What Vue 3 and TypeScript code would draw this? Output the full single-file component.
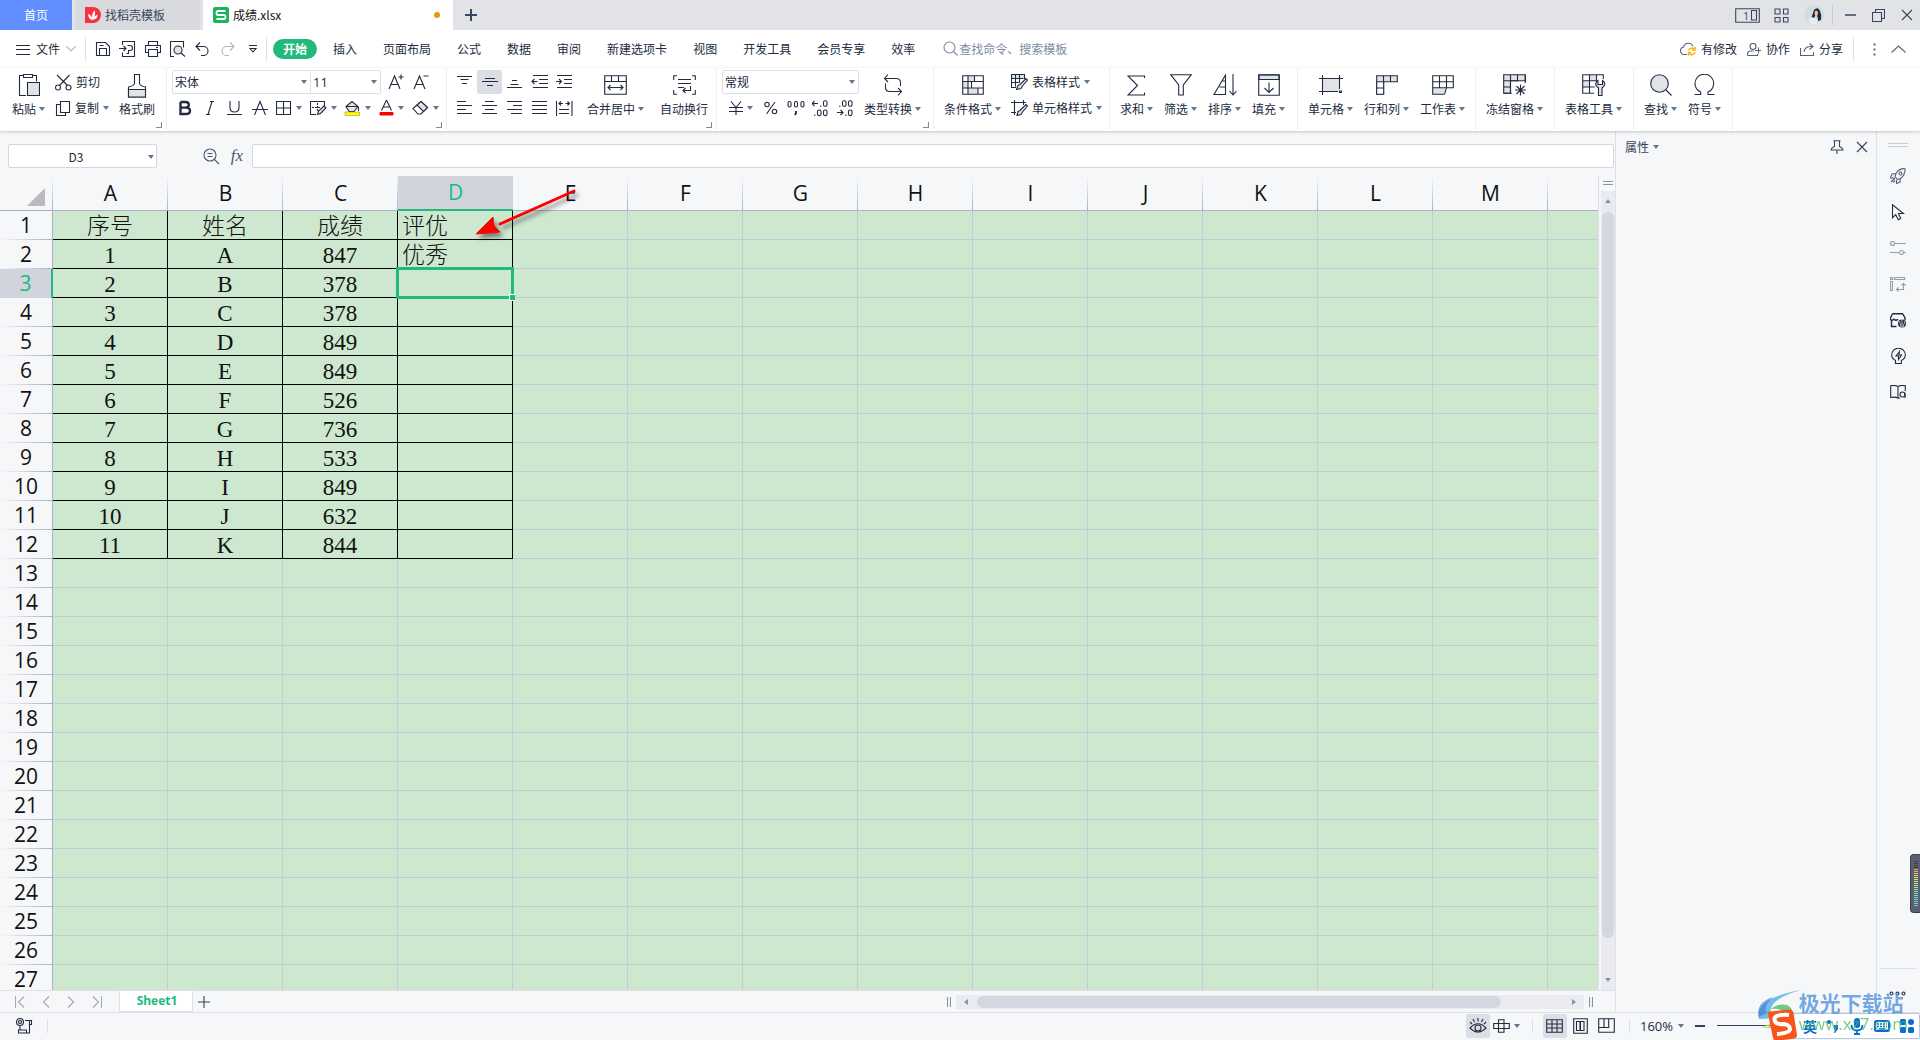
<script setup lang="ts">
import { h, ref } from 'vue'

type Glyph = [number, number, string]

const soft = 'fill="#e1e3e8"'
const icons: Record<string, Glyph> = {
  caret: [6, 4, '<path d="M0 0h6L3 4z" fill="currentColor" stroke="none"/>'],
  corner: [6, 6, '<path d="M5.500 0v5.500H0"/>'],
  menu: [14, 11, '<path d="M0 1.500h14M0 5.500h14M0 10.500h14"/>'],
  down: [10, 6, '<path d="M.5 .5l4.500 4.500 4.500-4.500"/>'],
  save: [16, 16, '<path d="M1.500 1.500h9l4 4v9h-13zM4.500 14.500v-7h7v7M4.500 4.500h4"/>'],
  exportPdf: [17, 16, '<path d="M3.500 4v-3.500h12v15h-12v-4M0 7.500h7M4.500 5l2.500 2.500-2.500 2.500M8.500 4.500h2.500a2 2 0 010 5H9.500v3H7.500"/>'],
  print: [16, 16, '<path d="M3.500 4.500v-4h9v4M3.500 11.500h-3v-7h15v7h-3M3.500 8.500h9v7h-9zM11 6.500h2"/>'],
  preview: [16, 16, `<path d="M4 15.500H.5V.5h13v6"/><circle cx="8" cy="9" r="4" ${soft}/><path d="M11 12l4 3.500"/>`],
  undo: [15, 14, '<path d="M5 .5l-4 4 4 4M1 4.500h7.500a4.500 4.500 0 010 9H6"/>'],
  redo: [15, 14, '<path d="M10 .5l4 4-4 4M14 4.500H6.500a4.500 4.500 0 000 9H9"/>'],
  more: [8, 8, '<path d="M0 .5h8M1 3.500l3 3.500 3-3.500z"/>'],
  search: [16, 16, '<circle cx="6.500" cy="6.500" r="5.500"/><path d="M10.500 10.500l4 4"/>'],
  plus: [14, 14, '<path d="M7 1v12M1 7h12"/>'],
  cloud: [17, 14, '<path d="M7 12.500H4.500A3.800 3.800 0 013.500 5 5 5 0 0113 4.500"/><g stroke="#f9b115" stroke-width="1.600"><path d="M8.500 8.500a3.500 3.500 0 016-1M15 10a3.500 3.500 0 01-6 1.500"/><path d="M15 5v3h-3M8.500 13.500v-3h3"/></g>'],
  collab: [15, 13, '<circle cx="6" cy="3.500" r="3"/><path d="M.5 12.500v-1.500q0-3 3-3h3M.5 12.500h10v-1.500M8 7.500h6M11.500 4.500v6"/>'],
  share: [15, 13, '<path d="M.5 5v7.500h13V9M4 9q.5-5 6-5.500h2.500M9.500 .5l3.500 3-3.500 3"/>'],
  dots: [3, 13, '<path d="M.5 .5h2v2h-2zM.5 5.500h2v2h-2zM.5 10.500h2v2h-2z" fill="currentColor" stroke="none"/>'],
  up: [15, 8, '<path d="M.5 7.500L7.500 1l7 6.500"/>'],
  screens: [25, 15, '<path d="M.7 .7h23.600v13.600H.7zM16.500 2.500h5v9.500h-5z"/><text x="8" y="12" font-size="11" fill="currentColor" stroke="none" font-family="Open Sans, sans-serif">1</text>'],
  apps: [15, 15, '<path d="M1 1h5v5H1zM9.500 1h4.500v5H9.500zM1 9.500h5V14H1zM9.500 9.500h4.500V14H9.500z"/>'],
  minimize: [11, 2, '<path d="M0 1h11" stroke-width="1.500"/>'],
  restore: [13, 13, '<path d="M3.500 3.500v-3h9v9h-3M.5 3.500h9v9h-9z"/>'],
  close: [12, 12, '<path d="M1 1l10 10M11 1L1 11"/>'],
  paste: [22, 24, `<path d="M8 22.500H1.500v-20h4M15 2.500h3.500v6M5.500 1.500h9v3h-9z"/><path d="M9.500 9.500h12v13h-12z" ${soft}/>`],
  cut: [17, 17, '<path d="M2 1l10.500 10.500M14.500 1L4.500 11.500"/><circle cx="3" cy="13.500" r="2.500"/><circle cx="13.500" cy="13.500" r="2.500"/>'],
  copy: [16, 17, '<path d="M5.500 4.500h-4v11h9v-3M5.500 1.500h9v11h-9z"/>'],
  brush: [20, 25, `<path d="M7.500 10V1.500h5V10q0 3 6 4v10H1.500V14q6-1 6-4z"/><path d="M1.500 16.500h17v7.500h-17z" ${soft}/>`],
  fontUp: [16, 16, '<path d="M1 15L6.500 2 12 15M3 10.500h7M10.500 3h5M13 .5v5"/>'],
  fontDown: [16, 16, '<path d="M1 15L6.500 2 12 15M3 10.500h7M10.500 2h5"/>'],
  bold: [14, 16, '<path d="M2.500 2v12H8q4 0 4-3.200T8 7.600H2.500M2.500 2H7.500q3.300 0 3.300 2.800T7.500 7.600" stroke-width="2.400"/>'],
  italic: [14, 16, '<path d="M7 1.500h4M3 14.500h4M9 1.500l-4 13"/>'],
  underline: [15, 16, '<path d="M3 1v6.500q0 4.500 4.500 4.500T12 7.500V1M0 14.500h15"/>'],
  strike: [16, 16, '<path d="M2.500 15L8 1.500 13.500 15M0 9.500h16"/>'],
  borders: [16, 16, '<path d="M.5 1.500h14v13h-14zM7.500 1.500v13M.5 8h14"/>'],
  drawBorder: [17, 16, `<path d="M6 14.500H.5v-13h14V6"/><path d="M7.500 3v9M2 7.500h8" stroke-dasharray="2 1"/><path d="M7.500 14.500l1-3.500 5.500-5 2 2-5.500 5.500z" ${soft}/>`],
  fill: [17, 16, `<path d="M2 6.500l6-5 6 5-4 5H5z" ${soft}/><path d="M2 6.500h12M14.500 7v4"/><path d="M1 12h14.500v3.500H1z" fill="#ff0" stroke="#9aa130" stroke-width=".6"/>`],
  fontColor: [15, 16, '<path d="M2.500 10.500L7.500 0l5 10.500M4 7h7"/><path d="M1 12.500h13v2.500H1z" fill="#f00" stroke="#f00" stroke-width="1"/>'],
  eraser: [17, 16, `<path d="M1 8.500L9 1.500l6.500 6L9 14H6z"/><path d="M5 5l6.500 6.500L15.500 7.500 9 1.500z" ${soft}/>`],
  top: [15, 14, '<path d="M0 1.500h15M3.500 4.500h8M5 8.500h5"/>'],
  middle: [16, 14, '<path d="M3 3.500h10M0 6.500h16M5 10.500h6"/>'],
  bottom: [15, 14, '<path d="M5 5.500h5M3.500 9.500h8M0 12.500h15"/>'],
  outdent: [17, 14, '<path d="M2 .5h15M8 4.500h9M8 8.500h9M2 12.500h15M1 6.500h5.500M3.500 4L1 6.500 3.500 9"/>'],
  indent: [17, 14, '<path d="M1 .5h15M8 4.500h8M8 8.500h8M1 12.500h15M0 6.500h5.500M3 4l2.500 2.500L3 9"/>'],
  left: [15, 14, '<path d="M0 .5h9M0 4.500h15M0 8.500h9M0 12.500h15"/>'],
  center: [15, 14, '<path d="M3 .5h9M0 4.500h15M3 8.500h9M0 12.500h15"/>'],
  right: [15, 14, '<path d="M0 .5h15M6 4.500h9M0 8.500h15M4 12.500h11"/>'],
  justify: [15, 14, '<path d="M0 .5h15M0 4.500h15M0 8.500h15M0 12.500h15"/>'],
  distribute: [17, 15, '<path d="M.5 0v15M16 0v15M3 8.500h10M3 12.500h10M3 2.500h4M9.500 2.500h4M5 .5l-2 2 2 2M11.500 .5l2 2-2 2"/>'],
  merge: [23, 20, '<path d="M.7 .7h21.600v18.600H.7zM.7 6.500h21.600M7.500 .7v5.800M14.500 .7v5.800M4 12.500h15M6.500 10L4 12.500 6.500 15M16.500 10l2.500 2.500-2.500 2.500"/>'],
  wrap: [23, 20, '<path d="M4 .7H.7V5M.7 15v4.300H4M19 .7h3.300V5M22.300 15v4.300H19M5 4.500h13M5 8.500h13M5 12.500h6M17.500 11v4.500H10M12.500 13L10 15.500l2.500 2.500"/>'],
  yen: [14, 16, '<path d="M2 1.500l5 6 5-6M7 7.500V15M0 7.500h14M0 11.500h14"/>'],
  percent: [14, 14, '<circle cx="3" cy="3.500" r="2.200"/><circle cx="10.500" cy="10.500" r="2.200"/><path d="M11 1L2.500 13"/>'],
  thousands: [18, 16, '<rect x="1" y="1.500" width="3" height="5.500" rx="1.500"/><rect x="7.500" y="1.500" width="3" height="5.500" rx="1.500"/><rect x="14" y="1.500" width="3" height="5.500" rx="1.500"/><path d="M9 11v2l-1 2" stroke-width="1.800"/>'],
  decLess: [17, 17, '<path d="M0 3.500h6M2.500 1L0 3.500 2.500 6M8 6.300h1.500M2 15.300h1.500"/><rect x="11.500" y=".7" width="3.500" height="5.600" rx="1.500"/><rect x="5.500" y="10" width="3.500" height="5.600" rx="1.500"/><rect x="11.500" y="10" width="3.500" height="5.600" rx="1.500"/>'],
  decMore: [17, 17, '<path d="M0 12.500h6M3.500 10L6 12.500 3.500 15M8 15.300h1.500M2 6.300h1.500"/><rect x="5.500" y=".7" width="3.500" height="5.600" rx="1.500"/><rect x="11.500" y=".7" width="3.500" height="5.600" rx="1.500"/><rect x="11.500" y="10" width="3.500" height="5.600" rx="1.500"/>'],
  convert: [20, 22, '<path d="M5 .5l-3.500 4 3.500 3.500M1.500 4.500H13q4.500 0 4.500 4V12M15 14l3.500 3.500L15 21.500M18.500 17.500H7q-4.500 0-4.500-4V9.500"/>'],
  condFmt: [22, 20, `<path d="M6 1h7v6H6zM1 7h5v6H1zM6 13h10v6H6z" ${soft} stroke="none"/><path d="M.7 .7h20.600v18.600H.7zM.7 6.500h20.600M.7 13h20.600M6 .7v18.600M12.500 .7v5.800M9.500 6.500v6.500M16 13v6.300"/>`],
  tableStyle: [17, 16, `<path d="M1 1h12v4H1z" ${soft} stroke="none"/><path d="M5 13.500H.5v-13h13V5M.5 4.500h12M.5 8.500h8M4.500 .5v12M8.500 .5v8"/><path d="M5.500 15.500l1.500-4 2-1 6-6 1.500 1.500-5 6-1.500 2.500z" ${soft}/>`],
  cellStyle: [17, 16, `<path d="M0 2.500h15M3.500 0v15M12.500 0v5M0 12.500h5"/><path d="M6 15.500l1-4 2-1 6-6 1.500 1.500-5 6-1.500 2.500z" ${soft}/>`],
  sum: [19, 21, '<path d="M17.500 3V1H1l9.500 9.500L1 20h16.500v-2.500"/>'],
  filter: [22, 22, '<path d="M.7 .7h20.600l-8 10.300v10h-4.600V11z"/>'],
  sort: [24, 22, '<path d="M12.500 20.500V1L1 20.500zM6.500 13h6M9.500 7h3M20 0v20.500M16.500 17l3.500 4 3.500-4"/>'],
  fillDown: [22, 22, `<path d="M1 1h20v4.500H1z" ${soft}/><path d="M.7 .7h20.600v20.600H.7zM11 8.500v9M6.500 14l4.500 4.500 4.500-4.500"/>`],
  cells: [24, 20, `<path d="M4 4h17v12H4z" ${soft} stroke="none"/><path d="M0 3.500h24M0 16.500h19M3.500 0v20M20.500 0v14M20.500 16h2v1.500h-2z"/>`],
  rowsCols: [22, 20, `<path d="M.7 .7h20.600v6H7.500v12.600H.7z" ${soft}/><path d="M.7 6.700h7v12.600h-7z" fill="#fff"/><path d="M7.500 .7v6M14.500 .7v6M.7 13h7"/>`],
  sheet: [22, 20, `<path d="M1 13h13l-2 6H1z" ${soft} stroke="none"/><path d="M12 19.300H.7V.7h20.600v12H14.500l-2 6.600M.7 6.700h20.600M.7 12.700h14M7.500 .7v12M14.500 .7v12"/>`],
  freeze: [24, 22, `<path d="M.7 .7h21.600v6H7.500v12.600H.7z" ${soft}/><path d="M7.500 .7v18.600M14.500 .7v6M22.300 .7V9M.7 6.700h15M.7 13h7M.7 19.300h8M17.500 10.500v11M12 16h11M13.500 12l8 8M21.500 12l-8 8"/>`],
  tableTool: [24, 22, `<path d="M1 7h6v6H1zM7 1h7v6H7z" ${soft} stroke="none"/><path d="M12 19.300H.7V.7h20.600V5M.7 6.700h14M.7 13h12M7.500 .7v18.600M14.500 .7v7"/><path d="M16 6.500q-3 2-2 5l2.500 2.500v7.500h3.500V14l2.500-2.500q1-3-2-5v4h-4.500z" ${soft}/>`],
  find: [22, 22, `<circle cx="9.500" cy="9.500" r="8.800" ${soft}/><path d="M16 16l5.500 5.500"/>`],
  omega: [21, 22, '<path d="M.5 20.500h6.200v-2.500A9.300 9.300 0 1114 18v2.500h6.500"/>'],
  zoomOut: [17, 17, '<circle cx="7" cy="7" r="6"/><path d="M11.500 11.500l4.500 4.500M4.500 5.500h5M4.500 8.500h5"/>'],
  pin: [14, 14, '<path d="M3.500 .7h7M4.500 .7v5.800q-3 1-3.500 3.500h12q-.5-2.500-3.500-3.500V.7M7 10v4"/>'],
  grip: [20, 4, '<path d="M0 .5h20M0 3.500h20" stroke="#c9cbd2"/>'],
  rocket: [16, 16, '<path d="M15 .7q-6-.5-9 4.800l-1 3 2.500 3 3-1Q15.500 7 15 .7zM6 5.500L2 6l-1.500 4h3.500M10.500 10l-.5 4-3.500 1.500V12M5 10l-4 4M3 14.500l2-2"/><circle cx="10.500" cy="5.500" r="1.500"/>'],
  cursor: [14, 17, '<path d="M1.500 .7v13l3.200-3 2.600 5 2.400-1.200L7.500 9.500h5z"/>'],
  sliders: [16, 14, '<circle cx="2.500" cy="2.500" r="2"/><path d="M4.500 2.500H16M0 11.500h9.500M13.500 11.500H16"/><circle cx="11.500" cy="11.500" r="2"/>'],
  pivot: [16, 15, '<path d="M.5 .5h2v2h-2zM4.500 .5h10v2h-10zM.5 4.500h2v9h-2zM6.500 12.500h7v-6M8.500 10.500l-2 2 2 2M11.500 8.500l2-2 2 2"/>'],
  shop: [17, 15, '<path d="M6.500 13.500h-5v-7M2.500 .7h10l2.500 4v2.500M2.500 .7l-2 4v2q2 1.500 3.500-.5 2 2 4 0" stroke-width="1.400"/><circle cx="12" cy="10.500" r="4" fill="currentColor" stroke="none"/><path d="M12 5.500v9M9.500 8l1.500 6M15 8l-2 6" stroke="#f6f7f9" stroke-width=".7"/>'],
  bulb: [15, 17, '<path d="M4.500 15.500v-3Q.7 10.500.7 7a6.500 6.500 0 0113.600 0q0 3.500-4 5.500v3z"/><path d="M8.500 3.500L5 8h2.500v3.500L10.500 7H8z"/>'],
  manual: [17, 14, '<path d="M8 13q-3-1.500-7.300-.5V.7Q5 0 8 1.500V13zM8 1.500Q11 0 15.300 .7V6"/><circle cx="12.500" cy="9.500" r="2.500"/><path d="M15 8v5M8 13h2"/>'],
  three: [18, 5, '<circle cx="2.500" cy="2.500" r="1.500"/><circle cx="8.500" cy="2.500" r="1.500"/><circle cx="14.500" cy="2.500" r="1.500"/>'],
  first: [10, 12, '<path d="M.5 0v12M9 .5L3.500 6 9 11.500"/>'],
  prev: [8, 12, '<path d="M7 .5L1.500 6 7 11.500"/>'],
  next: [8, 12, '<path d="M1 .5L6.500 6 1 11.500"/>'],
  last: [10, 12, '<path d="M9.500 0v12M1 .5L6.500 6 1 11.500"/>'],
  record: [17, 16, `<circle cx="4" cy="4" r="3.500" ${soft}/><circle cx="4" cy="4" r="1.500"/><path d="M9 2.500h6.500v4h-2M13.500 2.500v12.500h-11v-3h8v3M4 8v4"/>`],
  eye: [18, 16, '<path d="M1 10q8-8.500 16 0-8 8-16 0z"/><circle cx="9" cy="10" r="3"/><path d="M9 0v3.500M4 1l1.500 3M14 1l-1.500 3M1 4l2 2M17 4l-2 2"/>'],
  cross: [17, 14, '<path d="M5.500 .7h5.500v12.600H5.500zM.7 4.500h15.600v5H.7z"/>'],
  viewGrid: [17, 14, '<path d="M.7 .7h15.600v12.600H.7zM.7 5h15.600M.7 9h15.600M6 .7v12.600M11 .7v12.600"/>'],
  viewPage: [15, 16, '<path d="M.7 .7h13.600v14.600H.7zM3.500 3.500h3.500v9H3.500zM7.500 3.500h3.500v9H7.500z"/>'],
  viewBreak: [17, 15, '<path d="M.7 .7h15.600v13.600H.7zM.7 9.500h10v-9M6 .7v8.800"/>'],
  bars: [4, 10, '<path d="M.5 0v10M3.500 0v10"/>'],
  arrowUp: [6, 4, '<path d="M0 4h6L3 0z" fill="currentColor" stroke="none"/>'],
  arrowDown: [6, 4, '<path d="M0 0h6L3 4z" fill="currentColor" stroke="none"/>'],
  arrowLeft: [4, 6, '<path d="M4 0v6L0 3z" fill="currentColor" stroke="none"/>'],
  arrowRight: [4, 6, '<path d="M0 0v6l4-3z" fill="currentColor" stroke="none"/>'],
}

const Icon = (props: { n: string }) => {
  const [w, ht, body] = icons[props.n]
  return h('svg', {
    width: w, height: ht, viewBox: `0 0 ${w} ${ht}`, fill: 'none', stroke: 'currentColor',
    'stroke-width': 1.1, 'aria-hidden': 'true', innerHTML: body,
  })
}
Icon.props = ['n']

const quick = ['save', 'exportPdf', 'print', 'preview', 'undo', 'redo', 'more']
const menus = ['开始', '插入', '页面布局', '公式', '数据', '审阅', '新建选项卡', '视图', '开发工具', '会员专享', '效率']
const groups = [
  { cls: 'g-edit', items: [['sum', '求和'], ['filter', '筛选'], ['sort', '排序'], ['fillDown', '填充']] },
  { cls: 'g-cells', items: [['cells', '单元格'], ['rowsCols', '行和列'], ['sheet', '工作表']] },
  { cls: 'g-one', items: [['freeze', '冻结窗格']] },
  { cls: 'g-one', items: [['tableTool', '表格工具']] },
  { cls: 'g-find', items: [['find', '查找'], ['omega', '符号']] },
]
const side = ['rocket', 'cursor', 'sliders', 'pivot', 'shop', 'bulb', 'manual']

const cols = 'ABCDEFGHIJKLMN'.split('')
const data: string[][] = [
  ['序号', '姓名', '成绩', '评优'],
  ['1', 'A', '847', '优秀'],
  ['2', 'B', '378', ''],
  ['3', 'C', '378', ''],
  ['4', 'D', '849', ''],
  ['5', 'E', '849', ''],
  ['6', 'F', '526', ''],
  ['7', 'G', '736', ''],
  ['8', 'H', '533', ''],
  ['9', 'I', '849', ''],
  ['10', 'J', '632', ''],
  ['11', 'K', '844', ''],
]
const cellName = ref('D3')
const formula = ref('')
const zoom = ref(60)
const meter = ['#3b3f4c', '#3b3f4c', '#3b3f4c', '#3b3f4c', '#f0a078', '#f0b070', '#eec068', '#ecd068', '#e8dc6c', '#e8e070', '#dce478', '#cce880', '#bce888', '#a8e894', '#98e8a0', '#84e8b0', '#78e4bc', '#70e0c8', '#68dcd0', '#60d8d0', '#60d8d0', '#60d8d0', '#60d8d0']
</script>

<template>
  <div class="app">
    <header class="titlebar">
      <button class="tab home">首页</button>
      <button class="tab docer">
        <svg width="16" height="16" viewBox="0 0 16 16" aria-hidden="true"><path d="M0 0h8a8 8 0 010 16H0z" fill="#fa3040" /><path d="M7 13Q3 11 3 7q3 .5 4 4 0-5 2.500-8 1.500 4-1 8 1-2.500 4-3.500Q13 12 7 13z" fill="#fff" /></svg>
        找稻壳模板
      </button>
      <button class="tab file">
        <svg width="16" height="16" viewBox="0 0 16 16" aria-hidden="true"><rect width="16" height="16" rx="2" fill="#1cb35a" /><path d="M12.500 4H5Q3.500 4 3.500 6t1.500 2h6q1.500 0 1.500 2T11 12H3.500" fill="none" stroke="#fff" stroke-width="1.800" /></svg>
        成绩.xlsx
        <span class="dirty"></span>
      </button>
      <button class="add-tab" aria-label="新建标签"><Icon n="plus" /></button>
      <div class="win">
        <button aria-label="窗口"><Icon n="screens" /></button>
        <button aria-label="应用"><Icon n="apps" /></button>
        <button aria-label="账号">
          <svg width="20" height="20" viewBox="0 0 20 20" aria-hidden="true"><circle cx="10" cy="10" r="10" fill="#cfdde3" /><path d="M10 5q4-4 6 1 2 4 1 9l-3 1q0-5-2-6l-3 4q-2 0-1-3z" fill="#2c2830" /><path d="M11 6q3-1 3 2t-2 3-1-5z" fill="#e9c3b4" /><path d="M5 13q5-2 8 2v4q-6 1-8-2z" fill="#e6eef1" /></svg>
        </button>
        <span class="win-sep"></span>
        <button aria-label="最小化"><Icon n="minimize" /></button>
        <button aria-label="还原"><Icon n="restore" /></button>
        <button aria-label="关闭"><Icon n="close" /></button>
      </div>
    </header>

    <nav class="menubar">
      <button class="file-menu"><Icon n="menu" /><span>文件</span><Icon n="down" class="pale" /></button>
      <span class="vsep"></span>
      <div class="quick">
        <button v-for="q in quick" :key="q" :class="{ pale: q === 'redo' }" :aria-label="q"><Icon :n="q" /></button>
      </div>
      <span class="vsep"></span>
      <div class="menus">
        <button v-for="(m, i) in menus" :key="m" :class="{ on: i === 0 }">{{ m }}</button>
      </div>
      <label class="search"><Icon n="search" /><input type="text" placeholder="查找命令、搜索模板" /></label>
      <div class="menu-right">
        <button><Icon n="cloud" />有修改</button>
        <button><Icon n="collab" />协作</button>
        <button><Icon n="share" />分享</button>
        <span class="vsep"></span>
        <div class="minis">
          <button class="mini" aria-label="更多"><Icon n="dots" /></button>
          <button class="mini" aria-label="收起"><Icon n="up" /></button>
        </div>
      </div>
    </nav>

    <section class="ribbon">
      <div class="group g-clip">
        <button class="big"><span class="pic"><Icon n="paste" /></span><span class="lab">粘贴<Icon n="caret" /></span></button>
        <div class="stack">
          <button class="small"><Icon n="cut" />剪切</button>
          <button class="small"><Icon n="copy" />复制<Icon n="caret" class="car" /></button>
        </div>
        <button class="big"><span class="pic"><Icon n="brush" /></span><span class="lab">格式刷</span></button>
        <Icon n="corner" class="launch" />
      </div>
      <div class="group g-font">
        <div class="stack">
          <div class="row">
            <span class="pick pick-font"><select aria-label="字体"><option>宋体</option></select><Icon n="caret" class="car" /></span>
            <span class="pick pick-size"><select aria-label="字号"><option>11</option></select><Icon n="caret" class="car" /></span>
            <button class="ib" aria-label="增大字号"><Icon n="fontUp" /></button>
            <button class="ib" aria-label="减小字号"><Icon n="fontDown" /></button>
          </div>
          <div class="row">
            <button v-for="n in ['bold', 'italic', 'underline', 'strike']" :key="n" class="ib" :aria-label="n"><Icon :n="n" /></button>
            <button v-for="n in ['borders', 'drawBorder', 'fill', 'fontColor', 'eraser']" :key="n" class="ib wide" :aria-label="n"><Icon :n="n" /><Icon n="caret" class="car" /></button>
          </div>
        </div>
        <Icon n="corner" class="launch" />
      </div>
      <div class="group g-align">
        <div class="stack">
          <div class="row">
            <button v-for="n in ['top', 'middle', 'bottom', 'outdent', 'indent']" :key="n" class="ib" :class="{ active: n === 'middle' }" :aria-label="n"><Icon :n="n" /></button>
          </div>
          <div class="row">
            <button v-for="n in ['left', 'center', 'right', 'justify', 'distribute']" :key="n" class="ib" :aria-label="n"><Icon :n="n" /></button>
          </div>
        </div>
        <button class="big"><span class="pic"><Icon n="merge" /></span><span class="lab">合并居中<Icon n="caret" /></span></button>
        <button class="big"><span class="pic"><Icon n="wrap" /></span><span class="lab">自动换行</span></button>
        <Icon n="corner" class="launch" />
      </div>
      <div class="group g-num">
        <div class="stack">
          <div class="row">
            <span class="pick pick-num"><select aria-label="数字格式"><option>常规</option></select><Icon n="caret" class="car" /></span>
          </div>
          <div class="row num-row">
            <button class="ib wide" aria-label="货币"><Icon n="yen" /><Icon n="caret" class="car" /></button>
            <button v-for="n in ['percent', 'thousands', 'decLess', 'decMore']" :key="n" class="ib" :aria-label="n"><Icon :n="n" /></button>
          </div>
        </div>
        <button class="big"><span class="pic"><Icon n="convert" /></span><span class="lab">类型转换<Icon n="caret" /></span></button>
        <Icon n="corner" class="launch" />
      </div>
      <div class="group g-style">
        <button class="big"><span class="pic"><Icon n="condFmt" /></span><span class="lab">条件格式<Icon n="caret" /></span></button>
        <div class="stack">
          <button class="small"><Icon n="tableStyle" />表格样式<Icon n="caret" class="car" /></button>
          <button class="small"><Icon n="cellStyle" />单元格样式<Icon n="caret" class="car" /></button>
        </div>
      </div>
      <div v-for="(g, i) in groups" :key="i" class="group" :class="g.cls">
        <button v-for="it in g.items" :key="it[0]" class="big"><span class="pic"><Icon :n="it[0]" /></span><span class="lab">{{ it[1] }}<Icon n="caret" /></span></button>
      </div>
    </section>

    <main class="work">
      <section class="book">
        <div class="formula">
          <span class="namebox"><input v-model="cellName" aria-label="名称框" type="text" /><Icon n="caret" class="car" /></span>
          <button class="fx-zoom" aria-label="浏览公式"><Icon n="zoomOut" /></button>
          <button class="fx">fx</button>
          <input v-model="formula" class="fbar" aria-label="编辑栏" type="text" />
        </div>
        <div class="sheet">
          <div class="grid">
            <table>
              <colgroup><col class="c-head" /><col v-for="c in cols" :key="c" class="c-col" /></colgroup>
              <thead>
                <tr>
                  <th class="all"><svg width="18" height="18" viewBox="0 0 18 18" aria-hidden="true"><path d="M18 0v18H0z" fill="#b9babd" /></svg></th>
                  <th v-for="(c, i) in cols" :key="c" scope="col" :class="{ sel: c === 'D' }">{{ i < 13 ? c : '' }}</th>
                </tr>
              </thead>
              <tbody>
                <tr v-for="r in 27" :key="r">
                  <th scope="row" :class="{ sel: r === 3 }">{{ r }}</th>
                  <td v-for="(c, i) in cols" :key="c" :class="{ ink: r <= 12 && i < 4, lead: i === 3, cur: r === 3 && i === 3 }">{{ data[r - 1]?.[i] ?? '' }}</td>
                </tr>
              </tbody>
            </table>
            <svg class="arrow" width="130" height="80" viewBox="0 0 130 80" aria-hidden="true">
              <path d="M107 15L33 48" stroke="#f00" stroke-width="3" stroke-linecap="round" />
              <path d="M9 58L26 41 27 50 33 56z" fill="#f00" stroke="#f00" stroke-width="1" />
            </svg>
          </div>
          <div class="vscroll">
            <span class="vgrip"></span>
            <div class="vtrack"><Icon n="arrowUp" /><span class="vthumb"></span><Icon n="arrowDown" /></div>
          </div>
        </div>
        <div class="sheetbar">
          <div class="nav">
            <button v-for="n in ['first', 'prev', 'next', 'last']" :key="n" :aria-label="n"><Icon :n="n" /></button>
          </div>
          <button class="sheet-tab">Sheet1</button>
          <button class="sheet-add" aria-label="新建工作表"><Icon n="plus" /></button>
          <div class="hscroll">
            <Icon n="bars" />
            <div class="htrack"><Icon n="arrowLeft" /><span class="hthumb"></span><Icon n="arrowRight" /></div>
            <Icon n="bars" />
          </div>
        </div>
      </section>

      <aside class="panel">
        <button class="panel-title">属性<Icon n="caret" class="car" /></button>
        <span class="grow"></span>
        <button aria-label="固定"><Icon n="pin" /></button>
        <button aria-label="关闭"><Icon n="close" /></button>
      </aside>
      <aside class="side">
        <Icon n="grip" class="side-grip" />
        <button v-for="s in side" :key="s" :class="s" :aria-label="s"><Icon :n="s" /></button>
        <div class="side-foot"><button aria-label="更多"><Icon n="three" /></button></div>
      </aside>
    </main>

    <footer class="status">
      <button class="rec" aria-label="录制"><Icon n="record" /></button>
      <span class="ssep"></span>
      <span class="grow"></span>
      <button class="sb active" aria-label="护眼模式"><Icon n="eye" /></button>
      <button class="sb reading" aria-label="阅读模式"><Icon n="cross" /><Icon n="caret" class="car" /></button>
      <span class="ssep"></span>
      <div class="views">
        <button class="sb active" aria-label="普通视图"><Icon n="viewGrid" /></button>
        <button class="sb" aria-label="页面布局视图"><Icon n="viewPage" /></button>
        <button class="sb" aria-label="分页预览"><Icon n="viewBreak" /></button>
      </div>
      <span class="ssep"></span>
      <button class="pct">160%<Icon n="caret" class="car" /></button>
      <button class="minus" aria-label="缩小"><span></span></button>
      <input v-model="zoom" class="zoom" type="range" aria-label="缩放" />
    </footer>

    <div class="meter"><i v-for="(m, i) in meter" :key="i" :style="{ background: m }"></i></div>

    <div class="ime">
      <svg width="34" height="32" viewBox="0 0 34 32" aria-hidden="true"><path d="M4 5Q2 3 6 2.500L25 .5q4 0 4.500 3.500L33 26q0 3-3 3.500L13 32q-3 0-4-3z" fill="#f8541c" /><path d="M25 6Q10 5 10.500 10.500T20 15q6 1 6 5t-13 5" fill="none" stroke="#fff" stroke-width="4" /></svg>
      <div class="ime-bar">
        <b>英</b>
        <svg width="12" height="14" viewBox="0 0 12 14" aria-hidden="true"><circle cx="2" cy="3" r="2" fill="#0a6cd6" /><path d="M7 6h4v4l-3 4H7l1-4H7z" fill="#0a6cd6" /></svg>
        <svg width="14" height="17" viewBox="0 0 14 17" aria-hidden="true"><rect x="4" width="6" height="10" rx="3" fill="#0a6cd6" /><path d="M1.500 7q0 5.500 5.500 5.500T12.500 7M7 12.500V16M4 16h6" fill="none" stroke="#0a6cd6" stroke-width="1.800" /></svg>
        <svg width="16" height="12" viewBox="0 0 16 12" aria-hidden="true"><rect x="1" y="1" width="14" height="10" rx="1.500" fill="none" stroke="#0a6cd6" stroke-width="2" /><path d="M3 4h2M6 4h2M9 4h2M12 4h1M3 6.500h2M6 6.500h2M9 6.500h2M12 6.500h1M5 9h6" stroke="#0a6cd6" stroke-width="1.400" /></svg>
        <svg width="14" height="14" viewBox="0 0 14 14" aria-hidden="true"><rect width="6" height="6" rx="1.500" fill="#0a6cd6" /><circle cx="11" cy="3" r="3" fill="#0a6cd6" /><rect y="8" width="6" height="6" rx="1.500" fill="#0a6cd6" /><rect x="8" y="8" width="6" height="6" rx="1.500" fill="#0a6cd6" /></svg>
      </div>
    </div>
    <div class="mark">
      <svg width="44" height="42" viewBox="0 0 44 42" aria-hidden="true">
        <path d="M2 30Q-4 10 44 1 18 8 14 19q-2 8 6 10L2 30z" fill="#42a8e8" opacity=".75" />
        <path d="M2 28Q-2 14 16 8 5 18 10 24z" fill="#3c78c0" opacity=".6" />
        <path d="M14 20q6-6 16-4 8 4 4 12-8 12-30 11 22-2 24-14-2-6-14-5z" fill="#5cc070" opacity=".85" />
        <path d="M4 38q18-1 22-10l-4 0Q16 35 4 38z" fill="#e8d820" opacity=".8" />
      </svg>
      <div class="mark-text"><span class="mark-name">极光下载站</span><span class="mark-url">www.xz7.com</span></div>
    </div>
  </div>
</template>

<style>
body {
  margin: 0;
  overflow: hidden;
}
</style>

<style scoped>
.app {
  position: relative;
  display: flex;
  flex-direction: column;
  height: 100vh;
  overflow: hidden;
  background: #f6f7f9;
  color: #222b40;
  font: 12px/18px "Noto Sans CJK SC", sans-serif;
}
button, input, select {
  box-sizing: border-box;
  margin: 0;
  padding: 0;
  border: 0;
  outline: 0;
  background: none;
  color: inherit;
  font: inherit;
  white-space: nowrap;
}
svg { flex: none; display: block; }
.grow { flex: 1; }
.car { color: #68748e; }
.pale { color: #b3b5ba; }

.titlebar { display: flex; flex: none; height: 30px; background: #e2e3e7; color: #3a4661; }
.tab { display: flex; align-items: center; gap: 4px; height: 30px; padding: 0 10px; }
.home { justify-content: center; width: 72px; margin-right: 3px; background: #608eff; color: #fff; }
.docer { width: 125px; margin-right: 3px; background: #d9dade; }
.file { width: 250px; background: #fff; color: #111; }
.dirty { width: 6px; height: 6px; margin: 0 3px 0 auto; border-radius: 50%; background: #e69a08; }
.add-tab { display: grid; place-items: center; width: 36px; }
.add-tab svg { stroke-width: 2; }
.win { display: flex; align-items: center; margin-left: auto; }
.win button { display: grid; place-items: center; height: 30px; padding: 0 7px; }
.win button:nth-of-type(3) { padding: 0 8px; }
.win button:nth-of-type(4) { padding-left: 12px; }
.win button:nth-of-type(5) { padding: 0 9px; }
.win-sep { width: 1px; height: 20px; background: #c7c9d0; }

.menubar { display: flex; flex: none; align-items: center; height: 38px; background: #fff; }
.file-menu { display: flex; align-items: center; gap: 6px; padding: 0 9px 0 16px; }
.vsep { flex: none; width: 1px; height: 24px; background: #dfe1e6; }
.quick { display: flex; align-items: center; padding: 0 1px 0 4px; }
.quick button { display: grid; place-items: center; width: 25px; height: 24px; }
.menus { display: flex; align-items: center; gap: 6px; padding-left: 6px; }
.menus button { height: 20px; padding: 0 10px; border-radius: 10px; }
.menus .on { background: #22b97d; color: #fff; font-weight: 700; }
.search { display: flex; align-items: center; margin-left: 18px; color: #7d8aa5; }
.search input { width: 160px; }
.search input::placeholder { color: #7d8aa5; opacity: 1; }
.menu-right { display: flex; align-items: center; gap: 10px; margin-left: auto; padding-right: 12px; }
.menu-right button { display: flex; align-items: center; gap: 4px; }
.menu-right svg { color: #56627c; }
.minis { display: flex; gap: 4px; }
.minis .mini { width: 20px; justify-content: center; }

.ribbon { position: relative; z-index: 1; display: flex; flex: none; height: 63px; background: #fff; box-shadow: 0 1px 3px rgba(0, 0, 0, .2); }
.group { position: relative; box-sizing: border-box; display: flex; flex: none; align-items: flex-start; height: 62px; padding: 1px 0 0 5px; border-right: 1px solid #eeeff2; }
.g-clip { width: 167px; padding-left: 7px; }
.g-font { width: 280px; }
.g-align { width: 270px; gap: 5px; }
.g-num { width: 217px; }
.g-style { width: 176px; }
.g-edit { width: 188px; }
.g-cells { width: 178px; }
.g-one { width: 79px; }
.g-find { width: 99px; }
.big { display: flex; flex-direction: column; align-items: center; padding: 3px 6px 0 5px; }
.pic { display: grid; place-items: center; height: 26px; }
.lab { display: flex; align-items: center; gap: 3px; height: 22px; }
.lab svg { color: #68748e; }
.stack { display: flex; flex-direction: column; }
.row { display: flex; align-items: center; height: 26px; }
.num-row { padding-left: 2px; }
.small { display: flex; align-items: center; gap: 4px; height: 26px; padding: 0 5px 0 4px; }
.ib { display: flex; align-items: center; justify-content: center; width: 25px; height: 24px; border-radius: 2px; }
.wide { width: 34px; gap: 4px; }
.active { background: #dbdfe5; }
.launch { position: absolute; right: 4px; bottom: 2px; color: #7d88a0; }
.pick { position: relative; box-sizing: border-box; height: 24px; border: 1px solid #dcdfe4; border-radius: 2px; background: #fff; }
.pick select { width: 100%; height: 22px; padding: 0 2px; appearance: none; }
.pick .car { position: absolute; right: 3px; top: 9px; }
.pick-font { width: 139px; border-radius: 2px 0 0 2px; }
.pick-size { width: 70px; margin-right: 2px; border-left: 0; border-radius: 0 2px 2px 0; font: 13px/18px "Open Sans", sans-serif; }
.pick-num { width: 137px; }

.work { display: flex; flex: 1; min-height: 0; border-bottom: 1px solid #e0e1e7; }
.book { display: flex; flex: 1; flex-direction: column; min-width: 0; }
.formula { display: flex; flex: none; align-items: center; height: 45px; padding: 5px 1px 0 8px; box-sizing: border-box; }
.namebox { position: relative; box-sizing: border-box; width: 149px; height: 24px; margin-right: 46px; border: 1px solid #d5d8de; border-radius: 2px; background: #fff; }
.namebox input { width: 134px; height: 22px; text-align: center; }
.namebox .car { position: absolute; right: 2px; top: 10px; }
.fx-zoom { display: grid; margin-right: 8px; color: #4a5672; }
.fx { width: 18px; margin-right: 6px; color: #4a5672; font: italic 17px/22px "Liberation Serif", serif; }
.fbar { flex: 1; min-width: 0; height: 24px; padding: 0 6px; border: 1px solid #d5d8de; border-radius: 2px; background: #fff; }

.sheet { display: flex; flex: 1; min-height: 0; }
.grid { position: relative; flex: 1; min-width: 0; overflow: hidden; border-right: 1px solid #dcdde6; }
table { width: 1663px; table-layout: fixed; border-spacing: 0; border-collapse: separate; }
.c-head { width: 53px; }
.c-col { width: 115px; }
th, td { box-sizing: border-box; padding: 0; overflow: visible; white-space: nowrap; }
th { color: #111; font: 21px/27px "Open Sans", "Noto Sans", sans-serif; }
thead th {
  height: 35px;
  border-bottom: 1px solid #a9b0c9;
  background: linear-gradient(#f6f7f9, #a9b0c9) right / 1px 100% no-repeat #f6f7f9;
}
thead .sel { border-bottom: 2px solid #22b97d; background: #d2d4dd; color: #22b97d; }
.all svg { margin: 8px 8px 0 auto; }
tbody th {
  height: 29px;
  border-right: 1px solid #a9b0c9;
  background: linear-gradient(90deg, #f6f7f9, #a9b0c9) bottom / 100% 1px no-repeat #f6f7f9;
}
tbody .sel { border-right: 2px solid #22b97d; background: #d2d4dd; color: #22b97d; }
td {
  height: 29px;
  border-right: 1px solid #c4c9dc;
  border-bottom: 1px solid #c4c9dc;
  background: #cde8cf;
  color: #111;
  font: 23px/24px "Liberation Serif", "Noto Sans CJK SC", serif;
  font-weight: 300;
  text-align: center;
  vertical-align: bottom;
}
.ink { border-color: #000; }
.lead { padding-left: 4px; text-align: left; }
.cur { position: relative; }
.cur::before { content: ""; position: absolute; inset: -2px; border: 3px solid #22b97d; }
.cur::after { content: ""; position: absolute; right: -4px; bottom: -4px; width: 5px; height: 5px; border: 1px solid #fff; border-right-color: #cde8cf; background: #22b97d; }
.arrow { position: absolute; left: 467px; top: 0; filter: drop-shadow(3px 4px 2px rgba(0, 0, 0, .45)); }

.vscroll { display: flex; flex-direction: column; align-items: center; width: 16px; padding: 0 0 0 1px; box-sizing: border-box; }
.vgrip { flex: none; width: 10px; height: 2px; margin: 5px 0 6px; border: solid #8a96b0; border-width: 1px 0; }
.vtrack { display: flex; flex: 1; flex-direction: column; align-items: center; gap: 9px; padding: 8px 0; background: #e9ebf1; width: 14px; box-sizing: border-box; color: #8492b0; }
.vthumb { width: 12px; height: 726px; margin-bottom: auto; flex: 0 1 726px; border-radius: 6px; background: #d4d7df; }

.sheetbar { display: flex; flex: none; align-items: center; height: 22px; border-top: 1px solid #e0e1e7; box-sizing: border-box; }
.nav { display: flex; gap: 17px; width: 119px; padding-left: 15px; box-sizing: border-box; color: #a5a8ae; }
.sheet-tab { width: 74px; height: 21px; padding-left: 2px; border: solid #dfdfe6; border-width: 0 1px 1px; background: #fff; color: #22b97d; font: 700 12px/20px "Open Sans", sans-serif; }
.sheet-add { margin-left: 4px; color: #36425c; }
.hscroll { display: flex; align-items: center; gap: 5px; margin-left: auto; padding-right: 22px; color: #8492b0; }
.htrack { display: flex; align-items: center; width: 628px; height: 14px; padding: 0 8px; box-sizing: border-box; background: #e9ebf1; }
.hthumb { width: 524px; height: 12px; margin: 0 auto 0 9px; border-radius: 6px; background: #d4d7df; }

.panel { box-sizing: border-box; display: flex; flex: none; align-items: flex-start; width: 261px; padding: 7px 8px 0 9px; border-left: 1px solid #dfe1e9; }
.panel button { display: flex; align-items: center; height: 18px; gap: 4px; margin-left: 12px; color: #36425c; }
.panel .panel-title { margin: 0; }
.side { box-sizing: border-box; display: flex; flex: none; flex-direction: column; align-items: center; width: 44px; padding: 12px 1px 0 0; border-left: 1px solid #dfe1e9; }
.side-grip { margin: 0 0 11px; }
.side button { display: grid; place-items: center; width: 36px; height: 36px; }
.side .rocket { color: #56627c; }
.side .sliders, .side .pivot { color: #949cae; }
.side-foot { display: grid; justify-content: center; width: 38px; height: 43px; margin-top: auto; border-top: 1px solid #dfe1e9; }
.side-foot button { height: 48px; }

.status { display: flex; flex: none; align-items: center; height: 27px; padding: 0 138px 2px 0; box-sizing: border-box; }
.rec { padding-left: 16px; }
.ssep { width: 1px; height: 14px; margin: 0 10px; background: #dcdee5; }
.rec + .ssep { margin-left: 14px; }
.sb { display: flex; align-items: center; justify-content: center; gap: 4px; width: 24px; height: 24px; border-radius: 2px; }
.reading { width: 31px; margin-left: 1px; }
.views { display: flex; gap: 2px; }
.pct { display: flex; align-items: center; gap: 5px; font: 13px/18px "Open Sans", sans-serif; }
.minus { width: 10px; margin: 0 12px 0 11px; }
.minus span { display: block; height: 2px; background: #36425c; }
.zoom { width: 65px; height: 16px; appearance: none; }
.zoom::-webkit-slider-runnable-track { height: 1px; background: #36425c; }
.zoom::-webkit-slider-thumb { appearance: none; width: 1px; height: 1px; }

.meter { position: absolute; right: 0; top: 854px; box-sizing: border-box; display: flex; flex-direction: column; gap: 1px; width: 10px; height: 59px; padding: 6px 2px 0 3px; border: 1px solid #3b3f4c; border-right: 0; border-radius: 4px 0 0 4px; background: #5a6070; }
.meter i { flex: none; width: 4px; height: 1px; }

.ime { position: absolute; right: 0; bottom: 0; display: flex; width: 156px; height: 31px; }
.ime > svg { position: relative; z-index: 1; }
.ime-bar { position: absolute; inset: 4px 0 1px 14px; box-sizing: border-box; display: flex; align-items: center; justify-content: space-between; padding: 0 5px 0 24px; border: 1px solid #b3c8e4; border-radius: 2px; background: #fff; }
.ime-bar b { color: #0a6cd6; font-size: 14px; line-height: 20px; }
.mark { position: absolute; right: 12px; bottom: 9px; display: flex; align-items: flex-start; height: 42px; }
.mark-text { display: flex; flex-direction: column; margin-left: -2px; }
.mark-name { color: #5f9bdc; font-size: 21px; font-weight: 700; line-height: 26px; opacity: .85; }
.mark-url { color: #48b868; font: 17px/18px "Open Sans", sans-serif; opacity: .75; }
</style>
